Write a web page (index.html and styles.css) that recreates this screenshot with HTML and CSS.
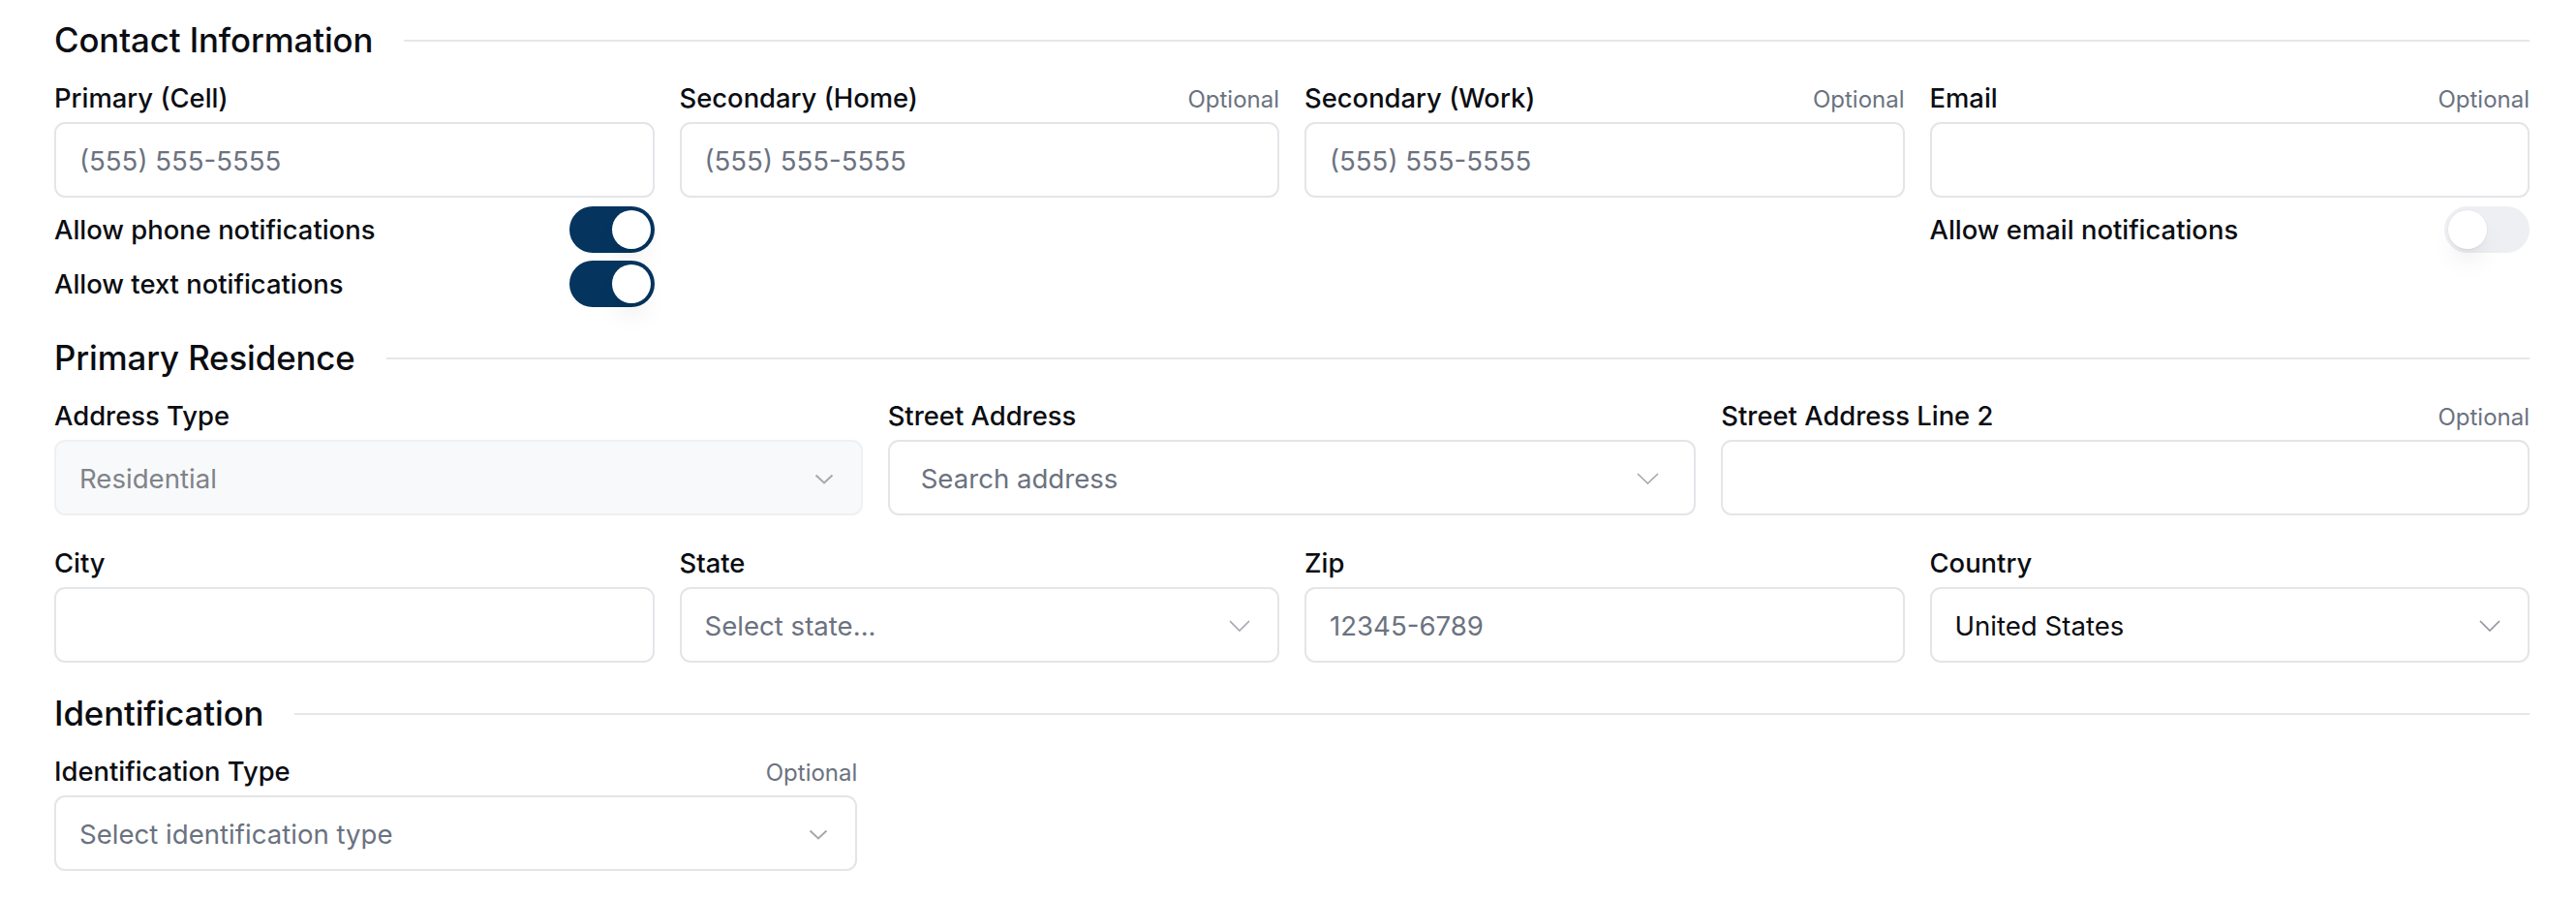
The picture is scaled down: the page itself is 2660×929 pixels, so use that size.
FILE: index.html
```html
<!DOCTYPE html>
<html lang="en">
<head>
<meta charset="utf-8">
<title>Contact Form</title>
<link rel="stylesheet" href="styles.css">
</head>
<body>
<main class="page">
  <section class="section">
    <div class="section-head"><h2>Contact Information</h2><div class="rule"></div></div>
    <div class="grid grid-4">
      <div class="field">
        <div class="label-row"><span class="label">Primary (Cell)</span></div>
        <div class="input"><span class="ph">(555) 555-5555</span></div>
        <div class="toggles">
          <div class="toggle-row"><span class="toggle-label">Allow phone notifications</span><span class="switch on"><span class="knob"></span></span></div>
          <div class="toggle-row"><span class="toggle-label">Allow text notifications</span><span class="switch on"><span class="knob"></span></span></div>
        </div>
      </div>
      <div class="field">
        <div class="label-row"><span class="label">Secondary (Home)</span><span class="optional">Optional</span></div>
        <div class="input"><span class="ph">(555) 555-5555</span></div>
      </div>
      <div class="field">
        <div class="label-row"><span class="label">Secondary (Work)</span><span class="optional">Optional</span></div>
        <div class="input"><span class="ph">(555) 555-5555</span></div>
      </div>
      <div class="field">
        <div class="label-row"><span class="label">Email</span><span class="optional">Optional</span></div>
        <div class="input"></div>
        <div class="toggles">
          <div class="toggle-row"><span class="toggle-label">Allow email notifications</span><span class="switch off"><span class="knob"></span></span></div>
        </div>
      </div>
    </div>
  </section>

  <section class="section">
    <div class="section-head"><h2>Primary Residence</h2><div class="rule"></div></div>
    <div class="grid grid-3">
      <div class="field">
        <div class="label-row"><span class="label">Address Type</span></div>
        <div class="input select disabled"><span class="val-muted">Residential</span>
          <svg class="chev" width="20" height="11" viewBox="0 0 20 11"><polyline points="1.5,1.5 10,9.5 18.5,1.5" fill="none" stroke="#a6a8ab" stroke-width="2"/></svg>
        </div>
      </div>
      <div class="field">
        <div class="label-row"><span class="label">Street Address</span></div>
        <div class="input select combo"><span class="ph">Search address</span>
          <svg class="chev" width="23" height="12" viewBox="0 0 23 12"><polyline points="1,1 11.5,11 22,1" fill="none" stroke="#a3a7ae" stroke-width="1.6"/></svg>
        </div>
      </div>
      <div class="field">
        <div class="label-row"><span class="label">Street Address Line 2</span><span class="optional">Optional</span></div>
        <div class="input"></div>
      </div>
    </div>
    <div class="grid grid-4 row-gap">
      <div class="field">
        <div class="label-row"><span class="label">City</span></div>
        <div class="input"></div>
      </div>
      <div class="field">
        <div class="label-row"><span class="label">State</span></div>
        <div class="input select"><span class="ph">Select state...</span>
          <svg class="chev" width="22" height="12" viewBox="0 0 22 12"><polyline points="1,1 11,11 21,1" fill="none" stroke="#a3a7ae" stroke-width="1.6"/></svg>
        </div>
      </div>
      <div class="field">
        <div class="label-row"><span class="label">Zip</span></div>
        <div class="input"><span class="ph">12345-6789</span></div>
      </div>
      <div class="field">
        <div class="label-row"><span class="label">Country</span></div>
        <div class="input select"><span class="val">United States</span>
          <svg class="chev" width="22" height="12" viewBox="0 0 22 12"><polyline points="1,1 11,11 21,1" fill="none" stroke="#8f939a" stroke-width="1.6"/></svg>
        </div>
      </div>
    </div>
  </section>

  <section class="section">
    <div class="section-head"><h2>Identification</h2><div class="rule"></div></div>
    <div class="grid grid-id">
      <div class="field">
        <div class="label-row"><span class="label">Identification Type</span><span class="optional">Optional</span></div>
        <div class="input select"><span class="ph">Select identification type</span>
          <svg class="chev" width="20" height="11" viewBox="0 0 20 11"><polyline points="1.5,1.5 10,9.5 18.5,1.5" fill="none" stroke="#a6a8ab" stroke-width="2"/></svg>
        </div>
      </div>
    </div>
  </section>
</main>
</body>
</html>
```

FILE: styles.css
```css
* { box-sizing: border-box; }

html, body {
  margin: 0;
  background: #ffffff;
}

body {
  font-family: Inter, "Noto Sans", "Liberation Sans", sans-serif;
  color: #0b0d12;
}

.page {
  padding: 17px 48px 0 56px;
}

.section + .section {
  margin-top: 28px;
}

.section-head {
  display: flex;
  align-items: center;
  gap: 32px;
  height: 49px;
  margin-bottom: 14px;
}

.section-head h2 {
  margin: 0;
  font-size: 34.8px;
  line-height: 49px;
  font-weight: 500;
  letter-spacing: -0.1px;
  white-space: nowrap;
}

.rule {
  flex: 1;
  height: 2px;
  background: #e6e7eb;
}

.grid {
  display: grid;
  column-gap: 26px;
  align-items: start;
}

.grid-4 { grid-template-columns: repeat(4, 1fr); }
.grid-3 { grid-template-columns: repeat(3, 1fr); }
.grid-id { grid-template-columns: repeat(3, 1fr); column-gap: 34px; }

.row-gap { margin-top: 28px; }

.field {
  display: flex;
  flex-direction: column;
  min-width: 0;
}

.label-row {
  display: flex;
  align-items: baseline;
  justify-content: space-between;
  height: 42px;
  line-height: 42px;
  margin-bottom: 4px;
}

.label {
  font-size: 27.4px;
  font-weight: 500;
  color: #0b0d12;
}

.optional {
  font-size: 24px;
  font-weight: 400;
  color: #6b7280;
}

.input {
  display: flex;
  align-items: center;
  justify-content: space-between;
  height: 78px;
  border: 2px solid #e4e5e9;
  border-radius: 11px;
  padding: 2px 28px 0 24px;
  background: #ffffff;
  font-size: 27.6px;
}

.input.disabled {
  background: #f8f9fa;
  border-color: #eff0f2;
}

.input.combo {
  padding-left: 32px;
  padding-right: 36px;
}

.ph { color: #6b7280; }
.val-muted { color: #7f838a; }
.val { color: #0b0d12; }

.chev { flex: none; display: block; }

.toggles {
  display: flex;
  flex-direction: column;
  gap: 8px;
  margin-top: 9px;
}

.toggle-row {
  display: flex;
  align-items: center;
  justify-content: space-between;
  height: 48px;
}

.toggle-label {
  font-size: 27.4px;
  font-weight: 500;
  color: #0b0d12;
}

.switch {
  position: relative;
  display: flex;
  align-items: center;
  width: 88px;
  height: 48px;
  border-radius: 24px;
  padding: 4px;
  flex: none;
}

.switch.on {
  background: #05345e;
  justify-content: flex-end;
}

.switch.off {
  background: #eeeff2;
  justify-content: flex-start;
}

.knob {
  width: 40px;
  height: 40px;
  border-radius: 50%;
  background: #ffffff;
  box-shadow: 0 17px 26px -5px rgba(0, 0, 0, 0.08), 0 7px 10px -7px rgba(0, 0, 0, 0.08);
}

.switch.off .knob {
  box-shadow: 0 0 0 1px rgba(0, 0, 0, 0.03), 0 17px 26px -5px rgba(0, 0, 0, 0.08), 0 7px 10px -7px rgba(0, 0, 0, 0.08);
}
```
